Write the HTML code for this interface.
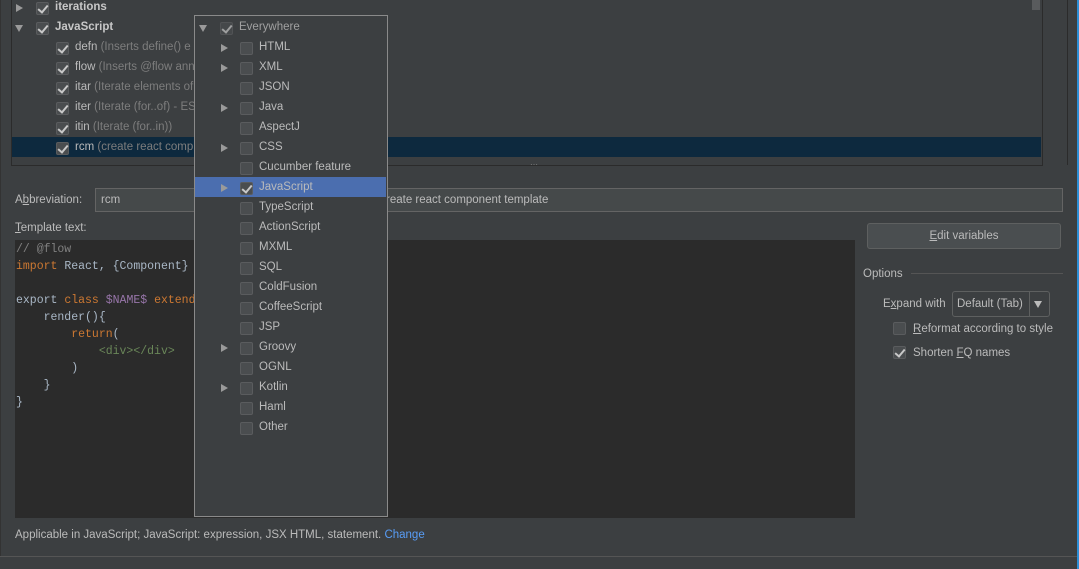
<!DOCTYPE html><html><head><style>
body{margin:0;width:1079px;height:569px;background:#3c3f41;position:relative;overflow:hidden;font-family:"Liberation Sans",sans-serif;font-size:11.5px;color:#bbbbbb}
.a{position:absolute}
.cb{position:absolute;width:13px;height:13px;background:#4a4d4f;border:1px solid #5a5c5e;border-radius:2px;box-sizing:border-box;margin-top:1px}
.ck::after{content:"";position:absolute;left:3px;top:0px;width:4px;height:8px;border:solid #c8c8c8;border-width:0 2px 2px 0;transform:rotate(40deg)}
.tri{position:absolute;width:0;height:0;border-left:7px solid #9a9a9a;border-top:4.5px solid transparent;border-bottom:4.5px solid transparent;margin-top:1px}
.trid{position:absolute;width:0;height:0;border-top:7px solid #9a9a9a;border-left:4.5px solid transparent;border-right:4.5px solid transparent;margin-top:1px}
.a:not(.cb):not(.tri):not(.trid){}
.t{margin-top:1px}
.g{color:#7d7d7d}
.mono{font-family:"Liberation Mono",monospace;font-size:11.5px;line-height:17px;white-space:pre;color:#a9b7c6}
.k{color:#cc7832}
</style></head><body>
<div class="a" style="left:11px;top:-1px;width:1030px;height:166px;border:1px solid #2b2b2b;border-top:none"></div>
<div class="a" style="left:1041px;top:0;width:26px;height:165px;border-right:1px solid #2b2b2b"></div>
<div class="a" style="left:1032px;top:0;width:8px;height:10px;background:#595b5d"></div>
<div class="a" style="left:1077px;top:0;width:2px;height:569px;background:#2d8fd6"></div>
<div class="a" style="left:12px;top:137px;width:1029px;height:20px;background:#0d293e"></div>
<div class="tri" style="left:16px;top:3px"></div><div class="cb ck" style="left:36px;top:1px"></div><div class="a t" style="left:55px;top:0;font-weight:bold;color:#c8c8c8">iterations</div>
<div class="trid" style="left:15px;top:24px"></div><div class="cb ck" style="left:36px;top:21px"></div><div class="a t" style="left:55px;top:20px;font-weight:bold;color:#c8c8c8">JavaScript</div>
<div class="cb ck" style="left:56px;top:41px"></div><div class="a t" style="left:75px;top:40px">defn <span class="g">(Inserts define() e</span></div>
<div class="cb ck" style="left:56px;top:61px"></div><div class="a t" style="left:75px;top:60px">flow <span class="g">(Inserts @flow ann</span></div>
<div class="cb ck" style="left:56px;top:81px"></div><div class="a t" style="left:75px;top:80px">itar <span class="g">(Iterate elements of</span></div>
<div class="cb ck" style="left:56px;top:101px"></div><div class="a t" style="left:75px;top:100px">iter <span class="g">(Iterate (for..of) - ES</span></div>
<div class="cb ck" style="left:56px;top:121px"></div><div class="a t" style="left:75px;top:120px">itin <span class="g">(Iterate (for..in))</span></div>
<div class="cb ck" style="left:56px;top:141px"></div><div class="a t" style="left:75px;top:140px">rcm <span class="g">(create react comp</span></div>
<div class="a g" style="left:530px;top:160px;font-size:8px">⋯</div>
<div class="a" style="left:15px;top:194px">A<u>b</u>breviation:</div>
<div class="a" style="left:95px;top:188px;width:966px;height:22px;background:#45494a;border:1px solid #646464"></div>
<div class="a" style="left:101px;top:194px">rcm</div>
<div class="a" style="left:386px;top:194px">reate react component template</div>
<div class="a" style="left:15px;top:222px"><u>T</u>emplate text:</div>
<div class="a" style="left:15px;top:240px;width:840px;height:278px;background:#2b2b2b"></div>
<div class="a mono" style="left:16px;top:241px"><span style="color:#808080">// @flow</span>
<span class="k">import</span> React, {Component}

export <span class="k">class</span> <span style="color:#9876aa">$NAME$</span> <span class="k">extend</span>
    render(){
        <span class="k">return</span>(
            <span style="color:#6a8759">&lt;div&gt;&lt;/div&gt;</span>
        )
    }
}</div>
<div class="a" style="left:867px;top:223px;width:192px;height:24px;background:#4a4e50;border:1px solid #5e6060;border-radius:3px;text-align:center;line-height:25px"><u>E</u>dit variables</div>
<div class="a" style="left:863px;top:268px">Options</div>
<div class="a" style="left:911px;top:273px;width:152px;height:1px;background:#555"></div>
<div class="a" style="left:883px;top:298px">E<u>x</u>pand with</div>
<div class="a" style="left:952px;top:291px;width:96px;height:24px;border:1px solid #5e6060;border-radius:3px;background:#3c3f41"></div>
<div class="a" style="left:957px;top:298px">Default (Tab)</div>
<div class="a" style="left:1029px;top:292px;width:1px;height:24px;background:#5e6060"></div>
<div class="trid" style="left:1034px;top:300px;border-top-color:#bbb"></div>
<div class="cb" style="left:893px;top:321px"></div><div class="a" style="left:913px;top:323px"><u>R</u>eformat according to style</div>
<div class="cb ck" style="left:893px;top:345px"></div><div class="a" style="left:913px;top:347px">Shorten <u>F</u>Q names</div>
<div class="a" style="left:15px;top:529px">Applicable in JavaScript; JavaScript: expression, JSX HTML, statement. <span style="color:#589df6">Change</span></div>
<div class="a" style="left:0;top:556px;width:1077px;height:1px;background:#555"></div>
<div class="a" style="left:0;top:0;width:1px;height:556px;background:#333"></div>
<div class="a" style="left:194px;top:15px;width:192px;height:500px;border:1px solid #8a8a8a;background:#3c3f41"></div>
<div class="a" style="left:195px;top:177px;width:191px;height:20px;background:#4b6eaf"></div>
<div class="trid" style="left:199px;top:24px"></div><div class="cb ck" style="left:220px;top:21px;opacity:.7"></div><div class="a t" style="left:239px;top:20px;color:#a0a0a0">Everywhere</div>
<div class="tri" style="left:221px;top:43px"></div><div class="cb" style="left:240px;top:41px"></div><div class="a t" style="left:259px;top:40px">HTML</div>
<div class="tri" style="left:221px;top:63px"></div><div class="cb" style="left:240px;top:61px"></div><div class="a t" style="left:259px;top:60px">XML</div>
<div class="cb" style="left:240px;top:81px"></div><div class="a t" style="left:259px;top:80px">JSON</div>
<div class="tri" style="left:221px;top:103px"></div><div class="cb" style="left:240px;top:101px"></div><div class="a t" style="left:259px;top:100px">Java</div>
<div class="cb" style="left:240px;top:121px"></div><div class="a t" style="left:259px;top:120px">AspectJ</div>
<div class="tri" style="left:221px;top:143px"></div><div class="cb" style="left:240px;top:141px"></div><div class="a t" style="left:259px;top:140px">CSS</div>
<div class="cb" style="left:240px;top:161px"></div><div class="a t" style="left:259px;top:160px">Cucumber feature</div>
<div class="tri" style="left:221px;top:183px"></div><div class="cb ck" style="left:240px;top:181px"></div><div class="a t" style="left:259px;top:180px">JavaScript</div>
<div class="cb" style="left:240px;top:201px"></div><div class="a t" style="left:259px;top:200px">TypeScript</div>
<div class="cb" style="left:240px;top:221px"></div><div class="a t" style="left:259px;top:220px">ActionScript</div>
<div class="cb" style="left:240px;top:241px"></div><div class="a t" style="left:259px;top:240px">MXML</div>
<div class="cb" style="left:240px;top:261px"></div><div class="a t" style="left:259px;top:260px">SQL</div>
<div class="cb" style="left:240px;top:281px"></div><div class="a t" style="left:259px;top:280px">ColdFusion</div>
<div class="cb" style="left:240px;top:301px"></div><div class="a t" style="left:259px;top:300px">CoffeeScript</div>
<div class="cb" style="left:240px;top:321px"></div><div class="a t" style="left:259px;top:320px">JSP</div>
<div class="tri" style="left:221px;top:343px"></div><div class="cb" style="left:240px;top:341px"></div><div class="a t" style="left:259px;top:340px">Groovy</div>
<div class="cb" style="left:240px;top:361px"></div><div class="a t" style="left:259px;top:360px">OGNL</div>
<div class="tri" style="left:221px;top:383px"></div><div class="cb" style="left:240px;top:381px"></div><div class="a t" style="left:259px;top:380px">Kotlin</div>
<div class="cb" style="left:240px;top:401px"></div><div class="a t" style="left:259px;top:400px">Haml</div>
<div class="cb" style="left:240px;top:421px"></div><div class="a t" style="left:259px;top:420px">Other</div>
</body></html>
